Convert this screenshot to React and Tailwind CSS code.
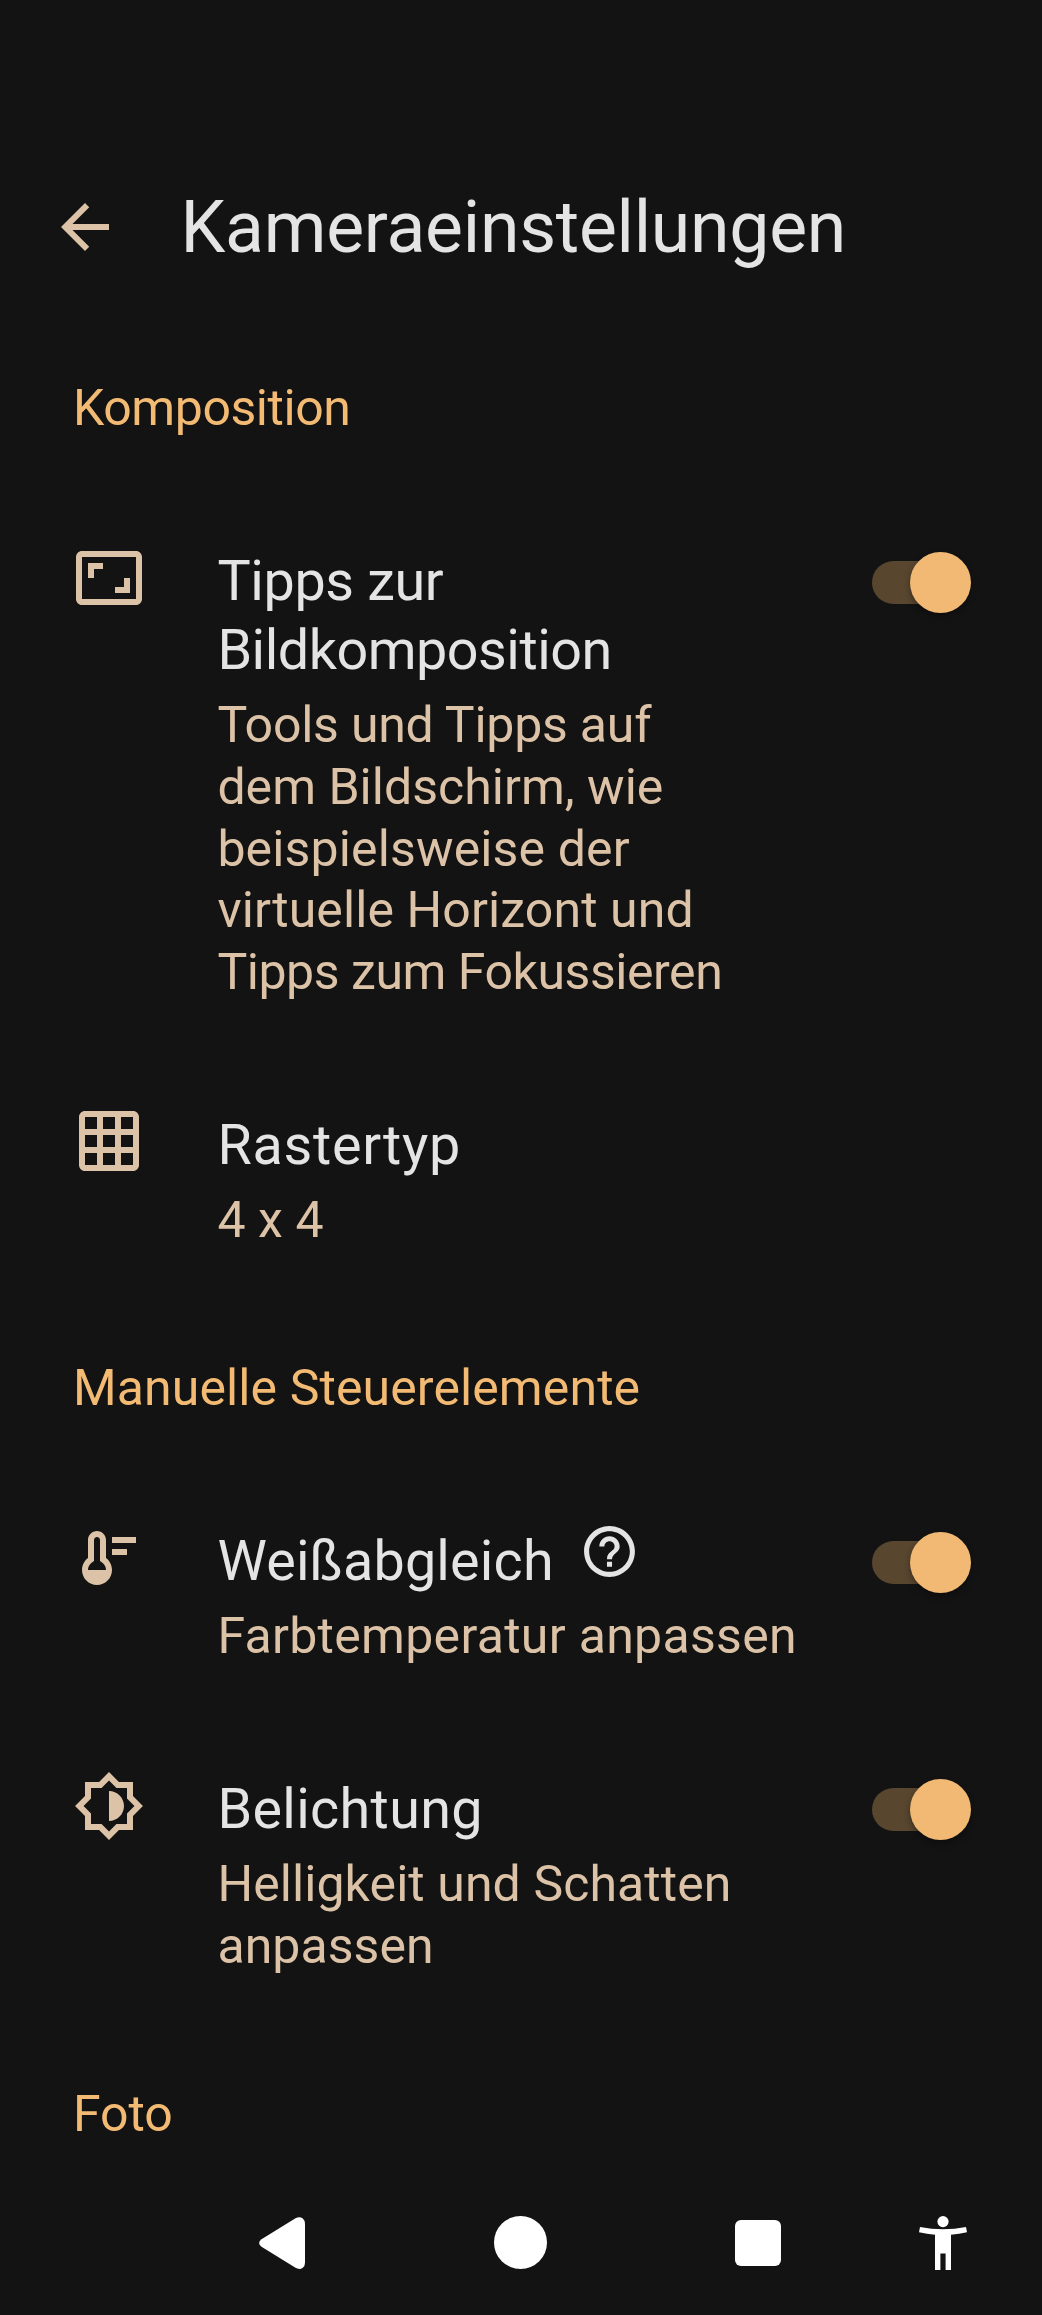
import React, { useState } from 'react';

const SECTIONS = [
  {
    title: 'Komposition',
    tracking: 'tracking-[-0.44px]',
    items: [
      {
        id: 'tips',
        icon: AspectIcon,
        title: [
          { text: 'Tipps zur', tracking: 'tracking-[-0.35px]' },
          { text: 'Bildkomposition', tracking: 'tracking-[-0.48px]' },
        ],
        summary: [
          { text: 'Tools und Tipps auf', tracking: 'tracking-[-0.22px]' },
          { text: 'dem Bildschirm, wie', tracking: 'tracking-[0.02px]' },
          { text: 'beispielsweise der', tracking: 'tracking-[0.14px]' },
          { text: 'virtuelle Horizont und', tracking: 'tracking-[0.1px]' },
          { text: 'Tipps zum Fokussieren', tracking: 'tracking-[-0.45px]' },
        ],
        toggle: true,
      },
      {
        id: 'grid',
        icon: GridIcon,
        title: [{ text: 'Rastertyp', tracking: 'tracking-[0.73px]' }],
        summary: [{ text: '4 x 4', tracking: 'tracking-[0.1px]' }],
      },
    ],
  },
  {
    title: 'Manuelle Steuerelemente',
    tracking: 'tracking-[0.1px]',
    items: [
      {
        id: 'whiteBalance',
        icon: ThermometerIcon,
        title: [{ text: 'Weißabgleich', tracking: 'tracking-[0.2px]' }],
        summary: [{ text: 'Farbtemperatur anpassen', tracking: 'tracking-[0.3px]' }],
        toggle: true,
        help: true,
      },
      {
        id: 'exposure',
        icon: BrightnessIcon,
        title: [{ text: 'Belichtung', tracking: 'tracking-[0.35px]' }],
        summary: [
          { text: 'Helligkeit und Schatten', tracking: 'tracking-[0.08px]' },
          { text: 'anpassen', tracking: 'tracking-[0.05px]' },
        ],
        toggle: true,
      },
    ],
  },
  { title: 'Foto', tracking: 'tracking-[-0.1px]', items: [] },
];

export default function App() {
  const [enabled, setEnabled] = useState({ tips: true, whiteBalance: true, exposure: true });

  const toggle = (id) => setEnabled((prev) => ({ ...prev, [id]: !prev[id] }));

  return (
    <div className="flex flex-col w-[1042px] h-[2315px] overflow-hidden bg-[#131313] font-['Roboto',sans-serif]">
      {/* App bar */}
      <header className="flex items-center h-[84px] mt-[185px] pl-[48.5px] shrink-0">
        <button aria-label="Zurück" className="text-[#dcc2a6]">
          <Icon className="size-[72px]">
            <path d="M20 11H7.83l5.59-5.59L12 4l-8 8 8 8 1.41-1.41L7.83 13H20v-2z" />
          </Icon>
        </button>
        <h1 className="ml-[60px] mt-[2px] text-[71.5px] leading-[84px] tracking-[-0.25px] text-[#e4e4e4]">
          Kameraeinstellungen
        </h1>
      </header>

      {/* Settings list */}
      <main className="flex-1 min-h-0 overflow-hidden pt-[56px]">
        {SECTIONS.map((section) => (
          <section key={section.title} className="pt-[52px]">
            <h2 className={`pl-[73px] mb-[54.5px] text-[50px] leading-[62px] text-[#f3ba73] ${section.tracking}`}>
              {section.title}
            </h2>
            {section.items.map((item) => (
              <SettingRow
                key={item.id}
                item={item}
                checked={enabled[item.id]}
                onToggle={() => toggle(item.id)}
              />
            ))}
          </section>
        ))}
      </main>

      <NavBar />
    </div>
  );
}

function SettingRow({ item, checked, onToggle }) {
  const ItemIcon = item.icon;
  return (
    <div className="flex items-start pt-[53.7px] pb-[53px] pl-[73px] pr-[71px]">
      <div className="-mt-[5.4px] text-[#dcc2a6] shrink-0">
        <ItemIcon />
      </div>
      <div className="flex-1 ml-[72.4px]">
        <div className="flex items-start">
          <h3 className="text-[55.7px] leading-[68.4px] text-[#e4e4e4]">
            {item.title.map((line) => (
              <span key={line.text} className={`block whitespace-nowrap ${line.tracking}`}>
                {line.text}
              </span>
            ))}
          </h3>
          {item.help && <HelpIcon />}
        </div>
        <p className="mt-[11px] text-[50px] leading-[61.8px] text-[#dcc2a6]">
          {item.summary.map((line) => (
            <span key={line.text} className={`block whitespace-nowrap ${line.tracking}`}>
              {line.text}
            </span>
          ))}
        </p>
      </div>
      {item.toggle && <Switch checked={checked} onClick={onToggle} />}
    </div>
  );
}

function Switch({ checked, onClick }) {
  return (
    <button
      role="switch"
      aria-checked={checked}
      onClick={onClick}
      className="flex items-center w-[99px] h-[61px] mt-[4.5px] shrink-0"
    >
      <span className="flex items-center w-[86px] h-[43px] rounded-full bg-[#58462f]">
        <span
          className={`size-[61px] shrink-0 rounded-full bg-[#f1b973] shadow-[0_3px_6px_rgba(0,0,0,0.35)] ${
            checked ? 'ml-[38px]' : '-ml-[13px]'
          }`}
        />
      </span>
    </button>
  );
}

// System navigation: back, home, recents and the accessibility shortcut
function NavBar() {
  return (
    <nav className="flex items-center h-[144px] shrink-0 pl-[259px] text-white">
      <svg viewBox="0 0 46 52" className="w-[46px] h-[52px]" fill="currentColor">
        <path d="M2.5 22.3 36.5 1.3Q40.5-.9 43.8 1.5Q46 3.2 46 7V45.5Q46 49 43.8 50.7Q40.5 53 36.5 50.8L2.5 29.8Q-2.2 26 2.5 22.3Z" />
      </svg>
      <div className="ml-[189px] -mt-[2px] size-[53px] rounded-full bg-white" />
      <div className="ml-[188px] size-[46px] rounded-[6px] bg-white" />
      <svg viewBox="0 0 48 54" className="ml-[137.5px] -mt-[1px] w-[48px] h-[54px]" fill="currentColor">
        <circle cx="24" cy="5.6" r="5.6" />
        <path d="M1 11Q24 15.5 47 11L48 16.2Q40 18 32 18.8V54H26.6V37.5H21.4V54H16V18.8Q8 18 0 16.2Z" />
      </svg>
    </nav>
  );
}

function Icon({ className, children }) {
  return (
    <svg viewBox="0 0 24 24" fill="currentColor" className={`block ${className}`}>
      {children}
    </svg>
  );
}

function AspectIcon() {
  return (
    <Icon className="size-[72px]">
      <path d="M19 12h-2v3h-3v2h5v-5zM7 9h3V7H5v5h2V9zm14-6H3c-1.1 0-2 .9-2 2v14c0 1.1.9 2 2 2h18c1.1 0 2-.9 2-2V5c0-1.1-.9-2-2-2zm0 16.01H3V4.99h18v14.02z" />
    </Icon>
  );
}

function GridIcon() {
  return (
    <Icon className="size-[72px]">
      <path d="M20 2H4c-1.1 0-2 .9-2 2v16c0 1.1.9 2 2 2h16c1.1 0 2-.9 2-2V4c0-1.1-.9-2-2-2zM8 20H4v-4h4v4zm0-6H4v-4h4v4zm0-6H4V4h4v4zm6 12h-4v-4h4v4zm0-6h-4v-4h4v4zm0-6h-4V4h4v4zm6 12h-4v-4h4v4zm0-6h-4v-4h4v4zm0-6h-4V4h4v4z" />
    </Icon>
  );
}

function ThermometerIcon() {
  return (
    <Icon className="size-[72px]">
      <path d="M11 12V6c0-1.66-1.34-3-3-3S5 4.34 5 6v6c-1.21.91-2 2.37-2 4 0 2.76 2.24 5 5 5s5-2.24 5-5c0-1.63-.79-3.09-2-4zm-6 4c0-.94.45-1.84 1.2-2.4L7 13V6c0-.55.45-1 1-1s1 .45 1 1v7l.8.6c.75.56 1.2 1.46 1.2 2.4H5zM13 5h8v2h-8zM13 9h5v2h-5z" />
    </Icon>
  );
}

function BrightnessIcon() {
  return (
    <Icon className="size-[72px]">
      <path
        fillRule="evenodd"
        d="M20 15.31L23.31 12 20 8.69V4h-4.69L12 .69 8.69 4H4v4.69L.69 12 4 15.31V20h4.69L12 23.31 15.31 20H20v-4.69zM18 14.48V18h-3.52L12 20.48 9.52 18H6v-3.52L3.52 12 6 9.52V6h3.52L12 3.52 14.48 6H18v3.52L20.48 12 18 14.48zM12 17c2.76 0 5-2.24 5-5s-2.24-5-5-5z"
      />
    </Icon>
  );
}

function HelpIcon() {
  return (
    <Icon className="size-[61px] ml-[25px] -mt-[5.6px] shrink-0 text-[#e4e4e4]">
      <path d="M11 18h2v-2h-2v2zm1-16C6.48 2 2 6.48 2 12s4.48 10 10 10 10-4.48 10-10S17.52 2 12 2zm0 18c-4.41 0-8-3.59-8-8s3.59-8 8-8 8 3.59 8 8-3.59 8-8 8zm0-14c-2.21 0-4 1.79-4 4h2c0-1.1.9-2 2-2s2 .9 2 2c0 2-3 1.75-3 5h2c0-2.25 3-2.5 3-5 0-2.21-1.79-4-4-4z" />
    </Icon>
  );
}
